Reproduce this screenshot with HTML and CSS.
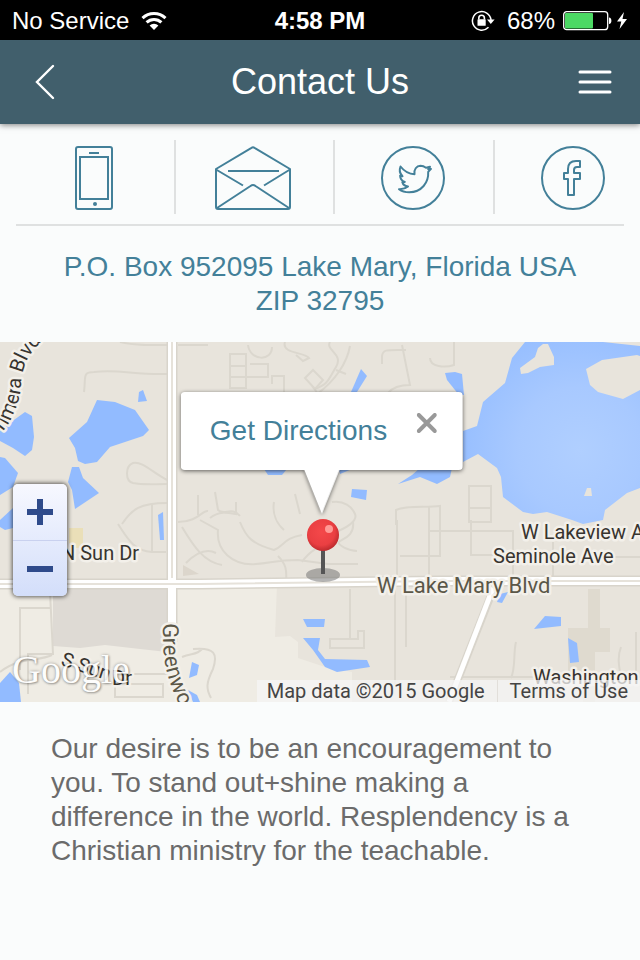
FILE: index.html
```html
<!DOCTYPE html>
<html lang="en">
<head>
  <meta charset="UTF-8">
  <meta name="viewport" content="width=device-width, initial-scale=1">
  <title>Contact Us</title>
  <link rel="stylesheet" href="styles.css">
</head>
<body>
  <div class="status-bar">
    <div class="status-left">
      <span>No Service</span>
      <svg width="26" height="20" viewBox="0 0 26 20" fill="none" stroke="#fff" stroke-width="3">
        <path d="M1.5 7.2a16.5 16.5 0 0 1 23 0"/>
        <path d="M5.6 11.4a10.6 10.6 0 0 1 14.8 0"/>
        <path d="M13 19l-4.400-4.400a6.300 6.300 0 0 1 8.800 0z" fill="#fff" stroke="none"/>
      </svg>
    </div>
    <div class="status-time">4:58 PM</div>
    <div class="status-right">
      <svg width="24" height="22" viewBox="0 0 24 22" fill="none" stroke="#fff">
        <path d="M17.500 17.300A9.300 9.300 0 1 1 20 10" stroke-width="1.500"/>
        <path d="M16 9.500h7.600L19.800 14z" fill="#fff" stroke="none"/>
        <path d="M7.800 9.500V8a2.800 2.800 0 0 1 5.600 0v1.500" stroke-width="1.600"/>
        <rect x="6.500" y="9.300" width="8.200" height="6.500" rx="0.600" fill="#fff" stroke="none"/>
      </svg>
      <span class="status-percent">68%</span>
      <svg width="65" height="20" viewBox="0 0 65 20">
        <rect x="0.700" y="0.700" width="44" height="18" rx="3" fill="none" stroke="#fff" stroke-width="1.300"/>
        <rect x="2" y="2" width="28" height="15.500" rx="1" fill="#4cd964"/>
        <path d="M46 6.500c3.200 0 3.200 6.500 0 6.500z" fill="#fff"/>
        <path d="M61 1l-7 9.500h4.300L56.500 18l7.500-10h-4.500z" fill="#fff"/>
      </svg>
    </div>
  </div>

  <header class="header">
    <button class="header-btn" type="button" aria-label="Back">
      <svg width="36" height="36" viewBox="0 0 36 36" fill="none" stroke="#fff" stroke-width="2.400" stroke-linecap="round">
        <path d="M25 2L9 18l16 16"/>
      </svg>
    </button>
    <h1 class="title">Contact Us</h1>
    <button class="header-btn header-menu" type="button" aria-label="Menu">
      <svg width="34" height="24" viewBox="0 0 34 24" stroke="#fff" stroke-width="3" stroke-linecap="round">
        <path d="M2 2h30M2 12h30M2 22h30"/>
      </svg>
    </button>
  </header>

  <main>
    <nav class="contacts">
      <a class="contact" href="#phone" aria-label="Phone">
        <svg width="38" height="64" viewBox="0 0 38 64" fill="none" stroke="#438099" stroke-width="2">
          <rect x="1" y="1" width="36" height="62" rx="2"/>
          <rect x="5" y="11" width="28" height="42"/>
          <path d="M14 7h10"/>
          <circle cx="20" cy="58" r="2" fill="#438099" stroke="none"/>
        </svg>
      </a>
      <a class="contact" href="#email" aria-label="Email">
        <svg width="76" height="64" viewBox="0 0 76 64" fill="none" stroke="#438099" stroke-width="2" stroke-linejoin="round">
          <path d="M1 23L36.500 1.800q1.500-1 3 0L75 23v38q0 2-2 2H3q-2 0-2-2z"/>
          <path d="M13 25h51M1 23.500l27 16M75 23.500l-26 16"/>
          <path d="M2 62l33.500-22q2.500-2 5 0L74 62"/>
        </svg>
      </a>
      <a class="contact" href="#twitter" aria-label="Twitter">
        <svg width="64" height="64" viewBox="0 0 64 64" fill="none" stroke="#438099" stroke-width="2" stroke-linejoin="round">
          <circle cx="32" cy="32" r="31"/>
          <path d="M19.500 20.500c3.500 4.500 8.500 7.500 14 7.800-.8-5 2-8.300 6-8.500 2.500 0 4.200 1 5.500 2l4-1-1.800 2.400 2.800-.3-2.800 3c.6 10.500-6.500 20.300-19 20.300-3.800 0-7.500-1-10.200-3 3.500.2 6.500-.6 9-2.700-3-.3-5-2-5.700-4.400l2.500-.2c-3-1-4.600-3.300-4.700-6.200l2.400.5c-2.600-2.400-3.400-6.200-2-9.700z"/>
        </svg>
      </a>
      <a class="contact" href="#facebook" aria-label="Facebook">
        <svg width="64" height="64" viewBox="0 0 64 64" fill="none" stroke="#438099" stroke-width="2" stroke-linejoin="round">
          <circle cx="32" cy="32" r="31"/>
          <path d="M27 49V33h-4v-6h4v-4c0-5 3-8 8-8h4v6h-3c-2 0-3 1-3 3v3h6v6h-6v16z"/>
        </svg>
      </a>
    </nav>

    <address class="address">P.O. Box 952095 Lake Mary, Florida USA ZIP 32795</address>

    <section class="map" aria-label="Map">
      <svg class="map-canvas" viewBox="0 0 640 360" preserveAspectRatio="xMidYMid slice">
        <defs>
          <radialGradient id="lake" gradientUnits="userSpaceOnUse" cx="580" cy="108" r="125">
            <stop offset="0" stop-color="#b0cfff"/>
            <stop offset="0.500" stop-color="#a8c9ff"/>
            <stop offset="1" stop-color="#96beff"/>
          </radialGradient>
          <radialGradient id="pin" cx="0.450" cy="0.400" r="0.600">
            <stop offset="0" stop-color="#f4484a"/>
            <stop offset="0.700" stop-color="#ea3f42"/>
            <stop offset="1" stop-color="#bd2b2e"/>
          </radialGradient>
          <path id="primera" d="M-6 98Q4 90 10 79Q19 62 21 45Q21 30 28 16Q36 3 50-8"/>
          <path id="greenwood" d="M163 281C162 318 166 338 184 372"/>
        </defs>
        <rect width="640" height="360" fill="#e8e4dc"/>
        <path class="land-light" d="M0 242H277L275 295L290 294L298 300V316L322 324L352 330V360H0z"/>
        <path class="land-dark" d="M53 247H167V310L140 307L105 303L80 306L53 304z"/>
        <path d="M588 247h12v39h10v24h-15v50h-12v-20h-15v-54h20z" fill="#dfdacf"/>
        <path d="M69 186h14v20H69z" fill="#eadfb8"/>
        <path d="M183 223l16 9-16 2z" fill="#dcd6cc"/>

        <!-- small streets -->
        <g class="street">
          <path d="M84 50c2-15-2-20 10-20c25-3 40 3 73 2M120 0c15 4 30 3 47 3"/>
          <path d="M167 138c-15-8-25-19-34-17c-8 3-8 18 0 20c10 2 20 1 34 1"/>
          <path d="M122 182c10-15 18-21 45-21M152 162v48M118 182c10 15 15 26 34 28h14M178 3h30"/>
          <path d="M178 180c20 0 24-12 30-11M198 153v20M215 150l3 18c6 6 14-4 22 6"/>
          <path d="M230 12h16v34h-16zM230 24h16M230 35h38v-13h-18"/>
          <path d="M248 3c2 16 24 17 24 2M285 0c-4 12 20 10 24 16l-6 3-7-6M272 42v-8h12v22M305 36l8-8 10 10-8 9zM312 44l14 18"/>
          <path d="M330 0c-5 8 14 12 6 25s-8 18-22 22M350 4c-3 17-15 35-33 48M336 28l10 4"/>
          <path d="M382 22v-8c1-7 5-6 24-6M402 3l8 40c-12 0-18 3-22 8M454 0v23c-9 3-24 2-24-7"/>
          <path d="M210 176c10-8 20-5 26-4v-12M274 160c-2 12 3 22 10 28M295 152l5 20M332 160c12-2 20 5 23 12s-8 14-24 20"/>
          <path d="M200 178l18 10c-2 20 14 36 38 34c15-1 20-4 42-4l30 4h30M240 180c6 15 12 22 34 28c10-4 10-12 28-15M286 240c1-12 0-18-8-26M302 220c8-12 20-18 34-22M353 180c2 15-12 17-14 20s10 9 18 9"/>
          <path d="M396 183v-15c12-5 30-2 44-4v50h-40M397 178v58M429 178v61M469 144h22v36h-22zM468 166h24M429 164v60M429 189h84v46M471 178v35h48M553 200v36M584 215h56"/>
          <path d="M395 248v95M350 247v50M330 297h28v-8h6v17h-34zM406 245v60M516 300c-3 12 0 25-5 36M450 335h190M621 305c-4 10-2 20 0 30M636 290v45"/>
          <path d="M20 328v-62h30M50 250l3 62-25 0v40M0 330c20-16 38-10 52-17M115 342h48v13h-48zM112 332h56"/>
          <path d="M193 307c22-2 25 5 20 20c-7 14-7 20-2 29M182 315c10-4 15-2 20-8"/>
          <path d="M182 185c12 20 22 35 40 38M186 221c12-12 22-14 30-10"/>
        </g>

        <!-- water -->
        <g class="water">
          <path d="M0 88L25 70L32 74L34 95L32 108L25 114L13 106L0 99z"/>
          <path d="M0 115L5 116L18 131L13 145L0 153z"/>
          <path d="M0 178L13 166V186L5 188L0 185z"/>
          <path d="M97 58L115 60L135 68L149 88L143 94L110 105L97 120L85 122L78 119L75 106L69 96L87 80z"/>
          <path d="M139 50L143 48L147 59L138 60z"/>
          <path d="M72 125H79L83 136L99 151L75 167L72 148L68 140z"/>
          <path d="M158 173L163 170L164 198H160z"/>
          <path d="M361 27L367 34L357 50H351z"/>
          <path d="M352 147L367 148L366 158L351 155z"/>
          <path d="M264 127H287L282 133H268z"/>
          <path d="M339 127H352L340 132z"/>
          <path d="M398 142L412 133L420 126H452L450 135L437 142L420 135z"/>
          <path d="M445 31L455 30L462 32L464 53H459L447 38z"/>
          <path d="M303 277H325L324 285H307z"/>
          <path d="M303 296H320L318 308L325 317L367 318L370 325L337 330L325 325L313 308z"/>
          <path d="M497 260L500 252L508 250L502 261z"/>
          <path d="M534 287L545 274L561 275V284z"/>
          <path d="M568 296L577 301L579 320L570 321z"/>
          <path d="M0 341L10 330L19 341L21 360H0z"/>
          <path d="M192 320L199 323L197 333L189 336z"/>
          <path d="M188 348L197 353L200 360H193z"/>
        </g>
        <path d="M525 0L512 16L505 41L483 60L477 84L463 89V120L478 112L497 126L501 135L503 155L523 170L533 172L547 170L572 178L583 182L603 178L605 168L627 151L640 146V0z" fill="url(#lake)"/>
        <g fill="#e8e4dc">
          <path d="M520 26L535 15L538 6L543 2H548L554 15V23L540 25L528 31L521 32z"/>
          <path d="M586 27L602 18L637 13L640 14V48L623 57L598 50L590 43z"/>
          <path d="M603 0L640 4V0z"/>
          <path d="M587 146H591L592 154H584z"/>
        </g>

        <!-- main roads -->
        <path d="M0 242H200L440 239H640" fill="none" stroke="#d8d4cb" stroke-width="11"/>
        <path d="M172 0V300" stroke="#d8d4cb" stroke-width="11"/>
        <path d="M0 242H200L440 239H640" fill="none" stroke="#fff" stroke-width="8"/>
        <path d="M172 0V300" stroke="#fff" stroke-width="8"/>
        <path d="M0 242H200L440 239H640M172 0V236" fill="none" stroke="#e6e2da" stroke-width="2"/>
        <path d="M493 248L449 360" stroke="#d8d4cb" stroke-width="8"/>
        <path d="M493 246L449 360" stroke="#fff" stroke-width="5"/>

        <!-- labels -->
        <g class="label">
          <text><textPath href="#primera">Primera Blvd</textPath></text>
          <text x="61" y="218">N Sun Dr</text>
          <text x="60" y="323" transform="rotate(18 60 323)">S Sun</text>
          <text x="112" y="343">Dr</text>
          <text x="521" y="197">W Lakeview Ave</text>
          <text x="493" y="221">Seminole Ave</text>
          <text x="533" y="342">Washington</text>
          <text class="label-road"><textPath href="#greenwood">Greenwood</textPath></text>
          <text class="label-road" x="377" y="251">W Lake Mary Blvd</text>
        </g>

        <!-- pin -->
        <ellipse cx="323" cy="233" rx="17" ry="7" fill="#777" opacity="0.550"/>
        <path d="M323 205v27" stroke="#555" stroke-width="4"/>
        <circle cx="323" cy="193" r="16" fill="url(#pin)"/>
        <circle cx="329" cy="187" r="4" fill="#ff9a96"/>
      </svg>

      <div class="popup">
        <a class="popup-link" href="#directions">Get Directions</a>
        <button class="popup-close" type="button" aria-label="Close">
          <svg width="20" height="20" viewBox="0 0 20 20" stroke="#999" stroke-width="4" stroke-linecap="round">
            <path d="M2 2l16 16M18 2L2 18"/>
          </svg>
        </button>
        <svg class="popup-tail" width="40" height="48" viewBox="0 0 40 48">
          <path d="M2 0L20 45L38 0z" fill="#fff"/>
        </svg>
      </div>

      <div class="zoom">
        <button class="zoom-btn" type="button" aria-label="Zoom in">
          <svg width="26" height="26" viewBox="0 0 26 26" stroke="#2f4b8b" stroke-width="6"><path d="M0 13h26M13 0v26"/></svg>
        </button>
        <button class="zoom-btn" type="button" aria-label="Zoom out">
          <svg width="26" height="26" viewBox="0 0 26 26" stroke="#2f4b8b" stroke-width="6"><path d="M0 13h26"/></svg>
        </button>
      </div>

      <a class="map-logo" href="#google">Google</a>
      <div class="map-credit">
        <span>Map data ©2015 Google</span>
        <a href="#terms">Terms of Use</a>
      </div>
    </section>

    <p class="about">Our desire is to be an encouragement to you. To stand out+shine making a difference in the world. Resplendency is a Christian ministry for the teachable.</p>
  </main>
</body>
</html>
```

FILE: styles.css
```css
* { box-sizing: border-box; }
body { margin: 0; background: #fafcfc; font-family: "Liberation Sans", Arial, sans-serif; overflow-x: hidden; }
button { margin: 0; padding: 0; border: 0; background: none; cursor: pointer; }
a { text-decoration: none; }
svg { display: block; }

/* status bar */
.status-bar { display: grid; grid-template-columns: 1fr auto 1fr; align-items: center; height: 40px; padding: 2px 12px 0; background: #000; color: #fff; font-size: 24px; }
.status-left, .status-right { display: flex; align-items: center; gap: 12px; }
.status-right { justify-content: flex-end; }
.status-percent + svg { margin-left: -4px; }
.status-time { font-weight: bold; }

/* header */
.header { display: grid; grid-template-columns: 1fr auto 1fr; align-items: center; height: 84px; padding: 0 28px; background: #415f6c; color: #fff; box-shadow: 0 1px 6px rgba(0, 0, 0, 0.5); position: relative; }
.header-btn { justify-self: start; }
.header-menu { justify-self: end; }
.title { margin: 0; font-size: 36px; font-weight: normal; }

/* contact links */
.contacts { display: flex; margin: 0 16px; padding: 16px 0 10px; border-bottom: 2px solid #dfe1e1; }
.contact { display: flex; flex: 0 0 26.25%; align-items: center; justify-content: center; height: 74px; padding: 2px 2px 0 0; border-right: 2px solid #dfe1e1; }
.contact:last-child { border-color: transparent; }

.address { padding: 24px 50px; color: #438099; font-size: 28px; font-style: normal; line-height: 34px; text-align: center; }
.about { margin: 0; padding: 30px 51px; color: #6b6b6b; font-size: 28px; line-height: 34px; }

/* map */
.map { position: relative; height: 360px; overflow: hidden; background: #e8e4dc; font-family: Roboto, sans-serif; }
.map-canvas { width: 100%; height: 100%; }
.land-light { fill: #efece4; }
.land-dark { fill: #dedad4; }
.street { fill: none; stroke: #dbd7ce; stroke-width: 2; }
.water { fill: #92bbff; }
.label { fill: #38342f; stroke: #f3f0ea; stroke-width: 5px; stroke-linejoin: round; paint-order: stroke; font-size: 20px; }
.label-road { fill: #5b5748; font-size: 22px; }

.popup { position: absolute; top: 50px; left: calc(50% + 2px); display: flex; align-items: center; gap: 30px; height: 78px; padding: 0 26px 0 29px; background: #fff; border-radius: 4px; filter: drop-shadow(0 1px 2px rgba(0, 0, 0, 0.6)); transform: translateX(-50%); }
.popup-link { color: #438099; font-family: "Liberation Sans", Arial, sans-serif; font-size: 28px; white-space: nowrap; }
.popup-close { padding-bottom: 16px; }
.popup-tail { position: absolute; top: 77px; left: 50%; transform: translateX(-50%); }

.zoom { position: absolute; top: 142px; left: 13px; width: 54px; border-radius: 5px; background: linear-gradient(#f7f8ff, #d3defa); box-shadow: 0 0 4px 1px rgba(0, 0, 0, 0.6); }
.zoom-btn { display: flex; align-items: center; justify-content: center; width: 100%; height: 56px; }
.zoom-btn + .zoom-btn { border-top: 1px solid #c9d1ef; }

.map-logo { position: absolute; bottom: 8px; left: 12px; color: #fff; font-family: "Liberation Serif", "Times New Roman", serif; font-size: 40px; line-height: 48px; opacity: 0.9; text-shadow: 0 0 3px rgba(0, 0, 0, 0.4), 1px 1px 2px rgba(0, 0, 0, 0.3); }
.map-credit { position: absolute; right: 0; bottom: 0; display: flex; height: 22px; background: rgba(245, 245, 245, 0.75); color: #444; font-size: 20px; line-height: 22px; white-space: nowrap; }
.map-credit span { padding: 0 12px 0 10px; }
.map-credit a { padding: 0 12px; border-left: 1px solid #e2dfda; color: #444; }
```
